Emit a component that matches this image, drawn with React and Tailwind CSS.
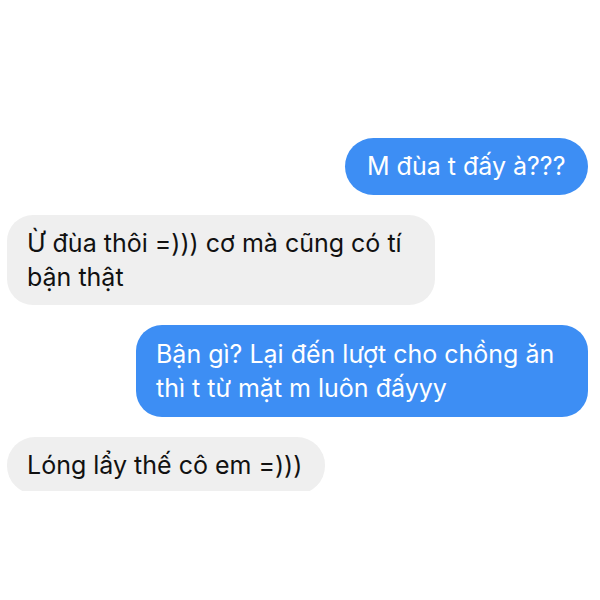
export default function App() {
  return (
    <div className="w-[600px] h-[600px] bg-white overflow-hidden" style={{ fontFamily: 'Inter, "Noto Sans", sans-serif' }}>
      <div className="flex flex-col pt-[138px] pr-[12px] pl-[7px] gap-[20px]">
        <div className="flex justify-end">
          <div className="bg-[#3d8ef4] text-white rounded-[29px] w-[243px] px-[22px] py-[10px] text-[25px] leading-[37px] whitespace-nowrap">
            M đùa t đấy à???
          </div>
        </div>
        <div className="flex justify-start">
          <div className="bg-[#efefef] text-[#111] rounded-[26px] pl-[20px] py-[11px] text-[25px] leading-[34px] w-[428px] whitespace-nowrap">
            Ừ đùa thôi =))) cơ mà cũng có tí
            <br />
            bận thật
          </div>
        </div>
        <div className="flex justify-end">
          <div className="bg-[#3d8ef4] text-white rounded-[26px] pl-[20px] py-[12px] text-[25px] leading-[34px] w-[452px] whitespace-nowrap">
            Bận gì? Lại đến lượt cho chồng ăn
            <br />
            thì t từ mặt m luôn đấyyy
          </div>
        </div>
        <div className="flex justify-start h-[54px] overflow-hidden">
          <div className="bg-[#efefef] text-[#111] rounded-[28px] px-[20px] py-[10px] text-[25px] leading-[37px] h-[57px] w-[318px] whitespace-nowrap">
            Lóng lẩy thế cô em =)))
          </div>
        </div>
      </div>
    </div>
  );
}
